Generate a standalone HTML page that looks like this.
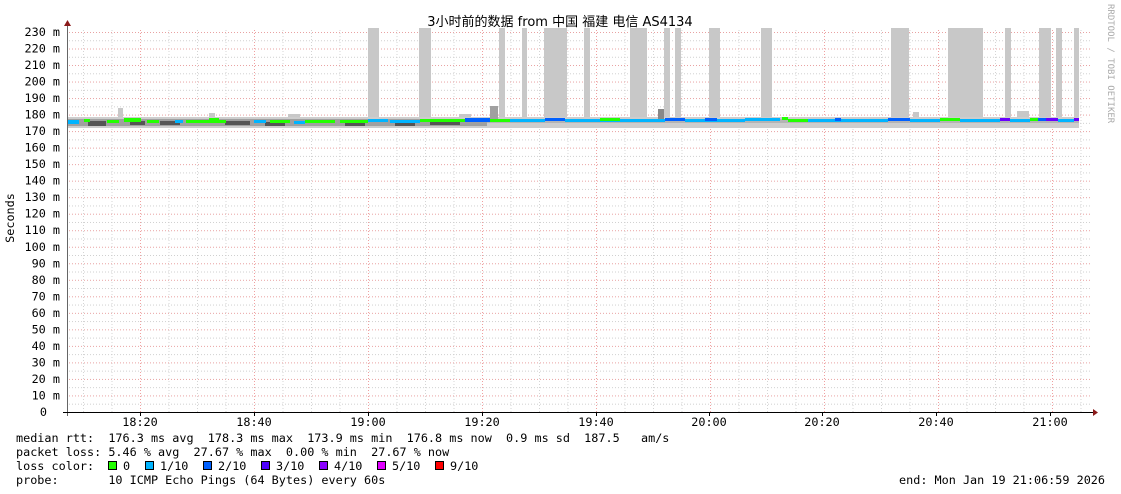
<!DOCTYPE html>
<html><head><meta charset="utf-8"><style>
html,body{margin:0;padding:0;background:#fff;}
svg{display:block;}
text{font-family:"DejaVu Sans Mono","Liberation Mono",monospace;font-size:11.8px;fill:#000;}
</style></head><body>
<svg width="1121" height="494" viewBox="0 0 1121 494" xmlns="http://www.w3.org/2000/svg">
<defs>
<pattern id="hg" x="0" y="32" width="1121" height="16.52" patternUnits="userSpaceOnUse">
<line x1="0" y1="0.5" x2="1121" y2="0.5" stroke="#e8a0a0" stroke-dasharray="1,2"/>
<line x1="0" y1="8.76" x2="1121" y2="8.76" stroke="#cfcfcf" stroke-dasharray="1,2"/>
</pattern>
<pattern id="vg" x="83" y="0" width="28.5" height="494" patternUnits="userSpaceOnUse">
<line x1="0.5" y1="0" x2="0.5" y2="494" stroke="#d4d4d4" stroke-dasharray="1,2"/>
</pattern>
<pattern id="vr" x="140" y="0" width="114" height="494" patternUnits="userSpaceOnUse">
<line x1="0.5" y1="0" x2="0.5" y2="494" stroke="#f0a0a0" stroke-dasharray="1,2"/>
</pattern>
</defs>
<rect x="67" y="28" width="1025" height="384" fill="url(#vg)"/>
<rect x="67" y="28" width="1025" height="384" fill="url(#hg)"/>
<rect x="67" y="28" width="1025" height="384" fill="url(#vr)"/>

<g fill="#c8c8c8">
<rect x="368" y="28" width="11" height="97"/>
<rect x="419" y="28" width="12" height="97"/>
<rect x="544" y="28" width="23" height="97"/>
<rect x="584" y="28" width="6" height="97"/>
<rect x="630" y="28" width="17" height="97"/>
<rect x="664" y="28" width="6" height="97"/>
<rect x="675" y="28" width="6" height="97"/>
<rect x="709" y="28" width="11" height="97"/>
<rect x="761" y="28" width="11" height="97"/>
<rect x="891" y="28" width="18" height="97"/>
<rect x="948" y="28" width="35" height="97"/>
<rect x="1005" y="28" width="6" height="97"/>
<rect x="1039" y="28" width="12" height="97"/>
<rect x="1056" y="28" width="6" height="97"/>
<rect x="1074" y="28" width="5" height="97"/>
<rect x="499" y="28" width="6" height="97"/>
<rect x="522" y="28" width="5" height="97"/>
<rect x="118" y="108" width="5" height="15"/>
<rect x="209" y="113" width="6" height="10"/>
<rect x="288" y="114" width="12" height="10"/>
<rect x="459" y="114" width="12" height="10"/>
<rect x="913" y="112" width="6" height="10"/>
<rect x="1017" y="111" width="12" height="10"/>
</g>
<rect x="67" y="117" width="1012" height="11" fill="#cdcdcd"/>
<rect x="67" y="119" width="420" height="7" fill="#a0a0a0"/>
<rect x="487" y="119" width="592" height="4" fill="#b4b4b4"/>
<g fill="#555">
<rect x="88" y="121" width="18" height="5"/><rect x="130" y="121" width="15" height="4"/>
<rect x="160" y="121" width="20" height="4"/><rect x="225" y="121" width="25" height="4"/>
<rect x="265" y="122" width="20" height="4"/><rect x="345" y="122" width="20" height="4"/>
<rect x="395" y="122" width="20" height="4"/><rect x="430" y="121" width="30" height="4"/>
</g>
<rect x="490" y="106" width="8" height="16" fill="#a0a0a0"/>
<rect x="658" y="109" width="6" height="12" fill="#888"/>
<g>
<rect x="67" y="120" width="12" height="4" fill="#00b4ff"/>
<rect x="84" y="119" width="6" height="3" fill="#22ff00"/>
<rect x="107" y="120" width="12" height="3" fill="#22ff00"/>
<rect x="124" y="118" width="17" height="4" fill="#22ff00"/>
<rect x="147" y="120" width="12" height="3" fill="#22ff00"/>
<rect x="175" y="120" width="8" height="3" fill="#00b4ff"/>
<rect x="186" y="120" width="40" height="3" fill="#22ff00"/>
<rect x="209" y="118" width="10" height="3" fill="#22ff00"/>
<rect x="254" y="120" width="12" height="3" fill="#00b4ff"/>
<rect x="270" y="120" width="20" height="3" fill="#22ff00"/>
<rect x="294" y="121" width="11" height="3" fill="#00b4ff"/>
<rect x="305" y="120" width="30" height="3" fill="#22ff00"/>
<rect x="340" y="120" width="28" height="3" fill="#22ff00"/>
<rect x="368" y="119" width="20" height="3" fill="#00b4ff"/>
<rect x="390" y="120" width="30" height="3" fill="#00b4ff"/>
<rect x="420" y="119" width="45" height="3" fill="#22ff00"/>
<rect x="465" y="118" width="25" height="4" fill="#0060ff"/>
<rect x="490" y="119" width="20" height="3" fill="#22ff00"/>
<rect x="510" y="119" width="35" height="3" fill="#00b4ff"/>
<rect x="545" y="118" width="20" height="3" fill="#0060ff"/>
<rect x="565" y="119" width="80" height="3" fill="#00b4ff"/>
<rect x="600" y="118" width="20" height="3" fill="#22ff00"/>
<rect x="645" y="119" width="20" height="3" fill="#00b4ff"/>
<rect x="665" y="118" width="20" height="3" fill="#0060ff"/>
<rect x="685" y="119" width="60" height="3" fill="#00b4ff"/>
<rect x="705" y="118" width="12" height="3" fill="#0060ff"/>
<rect x="745" y="118" width="35" height="3" fill="#00b4ff"/>
<rect x="782" y="117" width="6" height="3" fill="#22ff00"/>
<rect x="788" y="119" width="20" height="3" fill="#22ff00"/>
<rect x="808" y="119" width="60" height="3" fill="#00b4ff"/>
<rect x="835" y="118" width="6" height="3" fill="#0060ff"/>
<rect x="868" y="119" width="20" height="3" fill="#00b4ff"/>
<rect x="888" y="118" width="22" height="3" fill="#0060ff"/>
<rect x="910" y="119" width="30" height="3" fill="#00b4ff"/>
<rect x="940" y="118" width="20" height="3" fill="#22ff00"/>
<rect x="960" y="119" width="40" height="3" fill="#00b4ff"/>
<rect x="1000" y="118" width="10" height="3" fill="#6a00ff"/>
<rect x="1010" y="119" width="20" height="3" fill="#00b4ff"/>
<rect x="1030" y="118" width="8" height="3" fill="#22ff00"/>
<rect x="1038" y="118" width="10" height="3" fill="#0060ff"/>
<rect x="1046" y="118" width="12" height="3" fill="#6a00ff"/>
<rect x="1058" y="119" width="16" height="3" fill="#00b4ff"/>
<rect x="1074" y="118" width="5" height="3" fill="#6a00ff"/>
</g>

<line x1="67.5" y1="26" x2="67.5" y2="416" stroke="#666"/>
<line x1="63" y1="412.5" x2="1094" y2="412.5" stroke="#000"/>
<polygon points="64,26 67.5,20 71,26" fill="#8b1a1a"/>
<polygon points="1093,409 1098,412.5 1093,416" fill="#8b1a1a"/>
<g stroke="#000">
<line x1="140.5" y1="412" x2="140.5" y2="416"/><line x1="254.5" y1="412" x2="254.5" y2="416"/>
<line x1="368.5" y1="412" x2="368.5" y2="416"/><line x1="482.5" y1="412" x2="482.5" y2="416"/>
<line x1="596.5" y1="412" x2="596.5" y2="416"/><line x1="709.5" y1="412" x2="709.5" y2="416"/>
<line x1="822.5" y1="412" x2="822.5" y2="416"/><line x1="936.5" y1="412" x2="936.5" y2="416"/>
<line x1="1050.5" y1="412" x2="1050.5" y2="416"/>
</g>

<text x="560" y="26" text-anchor="middle" style="font-family:'DejaVu Sans','Noto Sans CJK SC',sans-serif;font-size:13px">3小时前的数据 from 中国 福建 电信 AS4134</text>
<text x="1108" y="4" transform="rotate(90 1108 4)" style="font-size:9px;fill:#aaa">RRDTOOL / TOBI OETIKER</text>
<text x="14" y="218" transform="rotate(-90 14 218)" text-anchor="middle">Seconds</text>

<g text-anchor="end">
<text x="60" y="36">230 m</text><text x="60" y="52.5">220 m</text><text x="60" y="69">210 m</text>
<text x="60" y="85.5">200 m</text><text x="60" y="102">190 m</text><text x="60" y="118.6">180 m</text>
<text x="60" y="135.1">170 m</text><text x="60" y="151.6">160 m</text><text x="60" y="168.2">150 m</text>
<text x="60" y="184.7">140 m</text><text x="60" y="201.2">130 m</text><text x="60" y="217.7">120 m</text>
<text x="60" y="234.2">110 m</text><text x="60" y="250.8">100 m</text><text x="60" y="267.3">90 m</text>
<text x="60" y="283.8">80 m</text><text x="60" y="300.3">70 m</text><text x="60" y="316.8">60 m</text>
<text x="60" y="333.4">50 m</text><text x="60" y="349.9">40 m</text><text x="60" y="366.4">30 m</text>
<text x="60" y="382.9">20 m</text><text x="60" y="399.5">10 m</text><text x="47" y="416">0</text>
</g>
<g text-anchor="middle">
<text x="140" y="426">18:20</text><text x="254" y="426">18:40</text><text x="368" y="426">19:00</text>
<text x="482" y="426">19:20</text><text x="596" y="426">19:40</text><text x="709" y="426">20:00</text>
<text x="822" y="426">20:20</text><text x="936" y="426">20:40</text><text x="1050" y="426">21:00</text>
</g>

<text x="16" y="442" xml:space="preserve">median rtt:  176.3 ms avg  178.3 ms max  173.9 ms min  176.8 ms now  0.9 ms sd  187.5   am/s</text>
<text x="16" y="456" xml:space="preserve">packet loss: 5.46 % avg  27.67 % max  0.00 % min  27.67 % now</text>
<text x="16" y="470" xml:space="preserve">loss color:</text>
<g stroke="#000" stroke-width="1">
<rect x="108.5" y="461.5" width="8" height="8" fill="#22ff00"/>
<rect x="145.5" y="461.5" width="8" height="8" fill="#00b4ff"/>
<rect x="203.5" y="461.5" width="8" height="8" fill="#0060ff"/>
<rect x="261.5" y="461.5" width="8" height="8" fill="#4e00ff"/>
<rect x="319.5" y="461.5" width="8" height="8" fill="#8a00ff"/>
<rect x="377.5" y="461.5" width="8" height="8" fill="#e000ff"/>
<rect x="435.5" y="461.5" width="8" height="8" fill="#ff0000"/>
</g>
<text x="123" y="470">0</text><text x="160" y="470">1/10</text><text x="218" y="470">2/10</text>
<text x="276" y="470">3/10</text><text x="334" y="470">4/10</text><text x="392" y="470">5/10</text><text x="450" y="470">9/10</text>
<text x="16" y="484" xml:space="preserve">probe:       10 ICMP Echo Pings (64 Bytes) every 60s</text>
<text x="1105" y="484" text-anchor="end">end: Mon Jan 19 21:06:59 2026</text>
</svg>
</body></html>
